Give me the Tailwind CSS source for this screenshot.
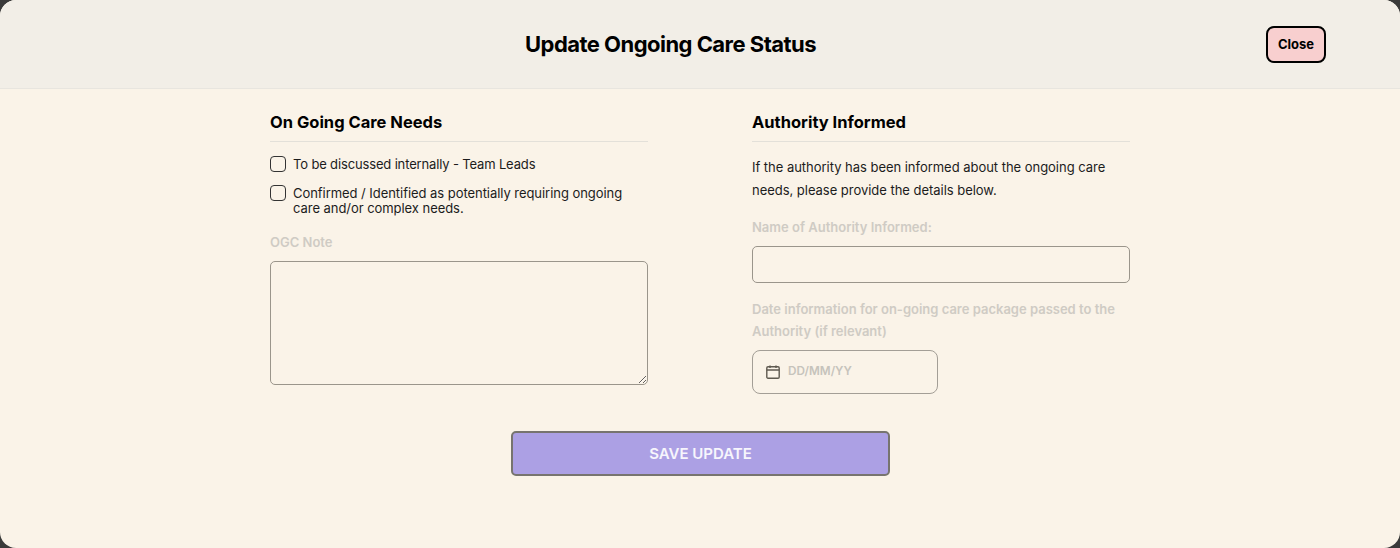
<!DOCTYPE html>
<html lang="en">
<head>
    <meta charset="UTF-8">
    <title>Update Ongoing Care Status</title>
    <script src="https://cdn.jsdelivr.net/npm/@tailwindcss/browser@4"></script>
</head>
<body class="bg-[#3a3a3a] font-['Inter',sans-serif] text-black h-[548px] overflow-hidden">
    <div class="h-[548px] bg-[#faf3e8] rounded-2xl overflow-hidden">
        <!-- header -->
        <div class="h-[89px] bg-[#f2eee7] border-b border-[#e8e5df] flex items-center pl-[525px] pr-[74px] justify-between">
            <h1 class="text-[22px] font-bold tracking-[-0.53px]">Update Ongoing Care Status</h1>
            <button class="w-[60px] h-[37px] pt-px bg-[#f8cfcf] border-2 border-black rounded-lg text-[13px] font-bold">Close</button>
        </div>

        <div class="w-[860px] mx-auto pt-[22px] grid grid-cols-2 gap-x-[104px]">
            <!-- left column -->
            <div>
                <h2 class="text-[16.5px] leading-[22px] font-bold pb-[8px] border-b border-[#e3e0d9]">On Going Care Needs</h2>
                <label class="flex items-start gap-[7px] mt-[14px] text-[13px] tracking-[-0.15px] leading-[15px] text-[#1c1c1c]">
                    <span class="w-[14px] h-[14px] border border-[#333] rounded-[4px] shrink-0 box-content"></span>
                    <span class="pt-px">To be discussed internally - Team Leads</span>
                </label>
                <label class="flex items-start gap-[7px] mt-[13px] text-[13px] tracking-[-0.05px] leading-[15px] text-[#1c1c1c]">
                    <span class="w-[14px] h-[14px] border border-[#333] rounded-[4px] shrink-0 box-content"></span>
                    <span class="pt-px pr-[20px]">Confirmed / Identified as potentially requiring ongoing care and/or complex needs.</span>
                </label>
                <div class="mt-[18px] text-[13px] leading-[16px] font-semibold text-[#cfcbc4]">OGC Note</div>
                <textarea class="block mt-[11px] w-full h-[124px] bg-transparent border-[1.5px] border-[#9a958b] rounded-[5px] outline-none"></textarea>
            </div>

            <!-- right column -->
            <div>
                <h2 class="text-[16.5px] leading-[22px] font-bold pb-[8px] border-b border-[#e3e0d9]">Authority Informed</h2>
                <p class="mt-[14px] text-[13px] tracking-[-0.03px] leading-[22.5px] text-[#1c1c1c]">If the authority has been informed about the ongoing care needs, please provide the details below.</p>
                <div class="mt-[18px] text-[13px] leading-[16px] font-semibold text-[#cfcbc4]">Name of Authority Informed:</div>
                <input type="text" class="block mt-[11px] w-full h-[37px] bg-transparent border-[1.5px] border-[#9a958b] rounded-[5px] outline-none">
                <div class="mt-[15px] text-[13px] leading-[22px] font-semibold text-[#cfcbc4]">Date information for on-going care package passed to the Authority (if relevant)</div>
                <div class="mt-[8px] w-[186px] h-[44px] border-[1.5px] border-[#a39e96] rounded-lg flex items-center pl-[13px] gap-[8px]">
                    <svg class="w-[14px] h-[14px]" viewBox="0 0 14 14" fill="none" stroke="#5f5a50" stroke-width="1.4">
                        <rect x="0.8" y="1.8" width="12.4" height="11.4" rx="1.2"/>
                        <path d="M0.8 5h12.4M4 0.4v2.6M10 0.4v2.6"/>
                    </svg>
                    <span class="text-[11.75px] font-semibold text-[#c6c3bc]">DD/MM/YY</span>
                </div>
            </div>
        </div>

        <div class="flex justify-center mt-[37px] pl-px">
            <button class="w-[379px] h-[45px] pt-px bg-[#aca0e4] border-2 border-[#77746f] rounded-[5px] text-white/90 text-[15px] font-semibold">SAVE UPDATE</button>
        </div>
    </div>
</body>
</html>
